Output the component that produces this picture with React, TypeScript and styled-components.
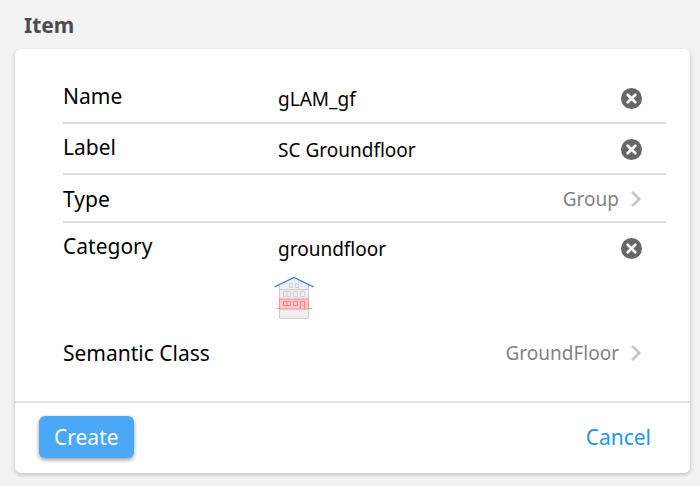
import React, { useState } from "react";
import styled, { createGlobalStyle } from "styled-components";

const GlobalStyle = createGlobalStyle`
  * { box-sizing: border-box; }
  body {
    margin: 0;
    background: #f2f2f2;
    color: #000;
    font-family: "Noto Sans", sans-serif;
    font-size: 21px;
    line-height: 30px;
  }
  button, input { font: inherit; }
`;

const Page = styled.main`
  padding: 10px 10px 13px 15px;
`;

const Title = styled.h1`
  margin: 0 0 9px;
  padding-left: 9px;
  color: #4b4b4b;
  font-size: 21px;
  font-weight: 700;
  line-height: 30px;
`;

const Card = styled.form`
  background: #fff;
  border-radius: 6px;
  box-shadow: 0 2px 4px rgba(0, 0, 0, 0.2);
`;

const Fields = styled.div`
  padding: 24px 24px 24px 48px;
`;

const Row = styled.div<{ $last?: boolean }>`
  display: grid;
  grid-template-columns: 35fr 65fr;
  border-bottom: ${(p) => (p.$last ? "none" : "2px solid #dedede")};
`;

const Label = styled.label`
  padding: 8px 0 11px;
`;

const Field = styled.div`
  display: flex;
  align-items: center;
  align-self: start;
  padding: 9px 24px 8px 4px;
`;

const TextInput = styled.input`
  flex: 1;
  min-width: 0;
  height: 32px;
  padding: 2px 0 0;
  border: 0;
  outline: 0;
  background: none;
  color: #000;
  font-size: 19px;
`;

const ClearButton = styled.button`
  display: flex;
  padding: 0;
  border: 0;
  background: none;
  cursor: pointer;
`;

const CategoryValue = styled.div`
  padding-bottom: 9px;
`;

const House = styled.svg`
  display: block;
  width: 42px;
  height: 44px;
  margin-top: 4px;
`;

const LinkRow = styled.button<{ $last?: boolean }>`
  display: flex;
  align-items: center;
  width: 100%;
  padding: 9px 24px 7px 0;
  border: 0;
  border-bottom: 2px solid ${(p) => (p.$last ? "transparent" : "#dedede")};
  background: none;
  color: #000;
  text-align: left;
  cursor: pointer;
`;

const LinkValue = styled.span`
  margin-left: auto;
  color: #828282;
  font-size: 19px;
`;

const Chevron = styled.svg`
  width: 10px;
  height: 16px;
  margin: 0 1px 0 12px;
`;

const Footer = styled.footer`
  display: flex;
  align-items: center;
  justify-content: space-between;
  padding: 13px 24px 15px;
  border-top: 2px solid #e2e2e2;
`;

const Action = styled.button<{ $filled?: boolean }>`
  height: 42px;
  padding: 0 15px;
  border: 0;
  border-radius: 6px;
  background: ${(p) => (p.$filled ? "#4aa8f7" : "none")};
  box-shadow: ${(p) => (p.$filled ? "0 2px 4px rgba(0, 0, 0, 0.4)" : "none")};
  color: ${(p) => (p.$filled ? "#fff" : "#2196f3")};
  cursor: pointer;
`;

function TextField({ id, initial }: { id: string; initial: string }) {
  const [value, setValue] = useState(initial);
  return (
    <Field>
      <TextInput id={id} value={value} onChange={(e) => setValue(e.target.value)} />
      <ClearButton type="button" aria-label={`Clear ${id}`} onClick={() => setValue("")}>
        <svg width="21" height="21" viewBox="0 0 21 21" aria-hidden="true">
          <circle cx="10.5" cy="10.5" r="10.5" fill="#666" />
          <path d="M6.7 6.7l7.6 7.6M14.3 6.7l-7.600 7.600" stroke="#fff" strokeWidth="2.700" strokeLinecap="round" />
        </svg>
      </ClearButton>
    </Field>
  );
}

function LinkField({ label, value, last }: { label: string; value: string; last?: boolean }) {
  return (
    <LinkRow type="button" $last={last}>
      <span>{label}</span>
      <LinkValue>{value}</LinkValue>
      <Chevron viewBox="0 0 10 16" aria-hidden="true">
        <path d="M1.900 1.700L8.200 8l-6.300 6.300" fill="none" stroke="#c7c7c7" strokeWidth="2.700" strokeLinecap="round" strokeLinejoin="round" />
      </Chevron>
    </LinkRow>
  );
}

function HouseIcon() {
  return (
    <House viewBox="1 0 42 44" aria-hidden="true" fill="none">
      <defs>
        <linearGradient id="ground" x1="0" x2="1" y1="0" y2="0">
          <stop offset="0" stopColor="#777" stopOpacity="0" />
          <stop offset="0.15" stopColor="#777" />
          <stop offset="0.85" stopColor="#777" />
          <stop offset="1" stopColor="#777" stopOpacity="0" />
        </linearGradient>
      </defs>
      <path d="M6.500 8.500L21 1.500l14.500 7V42.500h-29z" fill="#eee" />
      <path d="M6.500 8.500V42.500h29V8.500M6.500 13.500h29" stroke="#cfcfcf" />
      <g stroke="#cdcdcd" strokeWidth="0.900">
        <path d="M16.500 7.500h3v4h-3zM22.500 7.500h3v4h-3z" />
        <path d="M10.500 15.500h7v5h-7zM14 15.500v5M20.500 15.500h4v5h-4zM27.500 15.500h4v5h-4z" />
      </g>
      <rect x="1" y="32" width="40" height="1" fill="url(#ground)" opacity="0.7" />
      <rect x="6.500" y="23" width="29" height="10" fill="#ffc9cc" stroke="#ff8b90" />
      <g stroke="#fa7b80" strokeWidth="0.900">
        <path d="M10.500 25.500h7v4h-7zM14 25.500v4M20.500 25.500h4v4h-4z" />
        <path d="M27.500 33v-7.500h4V33M30 29v1" />
      </g>
      <path d="M1.500 10.900L21 1.500l19.500 9.400" stroke="#3c82e0" strokeWidth="1.250" />
    </House>
  );
}

export default function App() {
  return (
    <>
      <GlobalStyle />
      <Page>
        <Title>Item</Title>
        <Card onSubmit={(e) => e.preventDefault()}>
          <Fields>
            <Row>
              <Label htmlFor="name">Name</Label>
              <TextField id="name" initial="gLAM_gf" />
            </Row>
            <Row>
              <Label htmlFor="label">Label</Label>
              <TextField id="label" initial="SC Groundfloor" />
            </Row>
            <LinkField label="Type" value="Group" />
            <Row $last>
              <Label htmlFor="category">Category</Label>
              <CategoryValue>
                <TextField id="category" initial="groundfloor" />
                <HouseIcon />
              </CategoryValue>
            </Row>
            <LinkField label="Semantic Class" value="GroundFloor" last />
          </Fields>
          <Footer>
            <Action type="submit" $filled>
              Create
            </Action>
            <Action type="button">Cancel</Action>
          </Footer>
        </Card>
      </Page>
    </>
  );
}
